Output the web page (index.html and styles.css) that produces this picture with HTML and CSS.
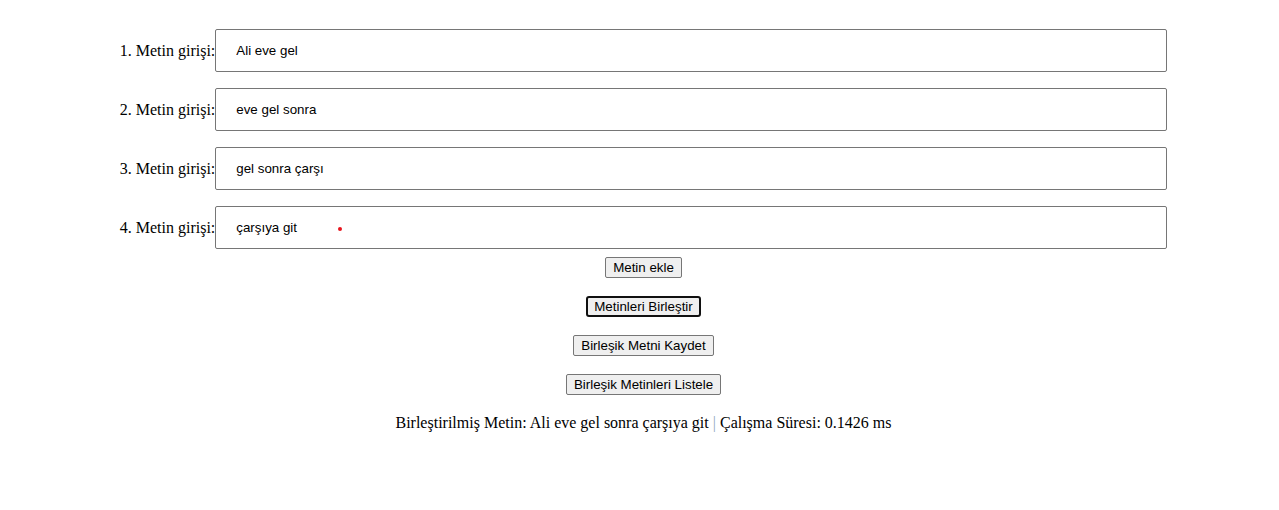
FILE: index.html
```html
<!DOCTYPE html>
<html lang="tr">
<head>
<meta charset="utf-8">
<title>Metin Birleştirme</title>
<link rel="stylesheet" href="styles.css">
</head>
<body>
<div class="page">
  <div class="rows">
    <div class="row"><label class="label">1. Metin girişi:</label><div class="field"><input class="input" type="text" value="Ali eve gel"></div></div>
    <div class="row"><label class="label">2. Metin girişi:</label><div class="field"><input class="input" type="text" value="eve gel sonra"></div></div>
    <div class="row"><label class="label">3. Metin girişi:</label><div class="field"><input class="input" type="text" value="gel sonra çarşı"></div></div>
    <div class="row"><label class="label">4. Metin girişi:</label><div class="field"><input class="input" type="text" value="çarşıya git"><span class="dot"></span></div></div>
  </div>
  <div class="actions">
    <button class="btn">Metin ekle</button>
    <button class="btn btn-focus">Metinleri Birleştir</button>
    <button class="btn">Birleşik Metni Kaydet</button>
    <button class="btn">Birleşik Metinleri Listele</button>
  </div>
  <p class="result">Birleştirilmiş Metin: Ali eve gel sonra çarşıya git <span class="sep">|</span> Çalışma Süresi: 0.1426 ms</p>
</div>
</body>
</html>
```

FILE: styles.css
```css
html, body {
  margin: 0;
  background: #fff;
}
body {
  padding: 29px 1px 0 9px;
  font-family: "Liberation Serif", "Times New Roman", serif;
  font-size: 16px;
  color: #000;
}
.page {
  display: flex;
  flex-direction: column;
  align-items: center;
}
.rows {
  display: flex;
  flex-direction: column;
  gap: 16px;
}
.row {
  display: flex;
  align-items: center;
  justify-content: center;
}
.label {
  white-space: nowrap;
}
.field {
  position: relative;
}
.input {
  display: block;
  box-sizing: border-box;
  width: 952px;
  height: 43px;
  margin: 0;
  padding: 0 20px;
  border: 1px solid #767676;
  border-radius: 2px;
  font-family: "Liberation Sans", Arial, sans-serif;
  font-size: 13.3333px;
  color: #000;
  background: #fff;
  outline: none;
}
.dot {
  position: absolute;
  left: 123px;
  top: 21px;
  width: 4px;
  height: 4px;
  border-radius: 50%;
  background: #e8141c;
}
.actions {
  display: flex;
  flex-direction: column;
  align-items: center;
  gap: 18px;
  margin-top: 8px;
}
.btn {
  box-sizing: border-box;
  height: 21px;
  margin: 0;
  padding: 1px 7px;
  border: 1px solid #767676;
  border-radius: 2px;
  background: #efefef;
  font-family: "Liberation Sans", Arial, sans-serif;
  font-size: 13.3333px;
  color: #000;
  line-height: 17px;
}
.btn-focus {
  border: 2px solid #101010;
  border-radius: 3px;
  padding: 0 6px;
  outline: none;
}
.result {
  margin: 19px 0 0;
  line-height: 18px;
}
.sep {
  color: #8fa6c0;
}
```
